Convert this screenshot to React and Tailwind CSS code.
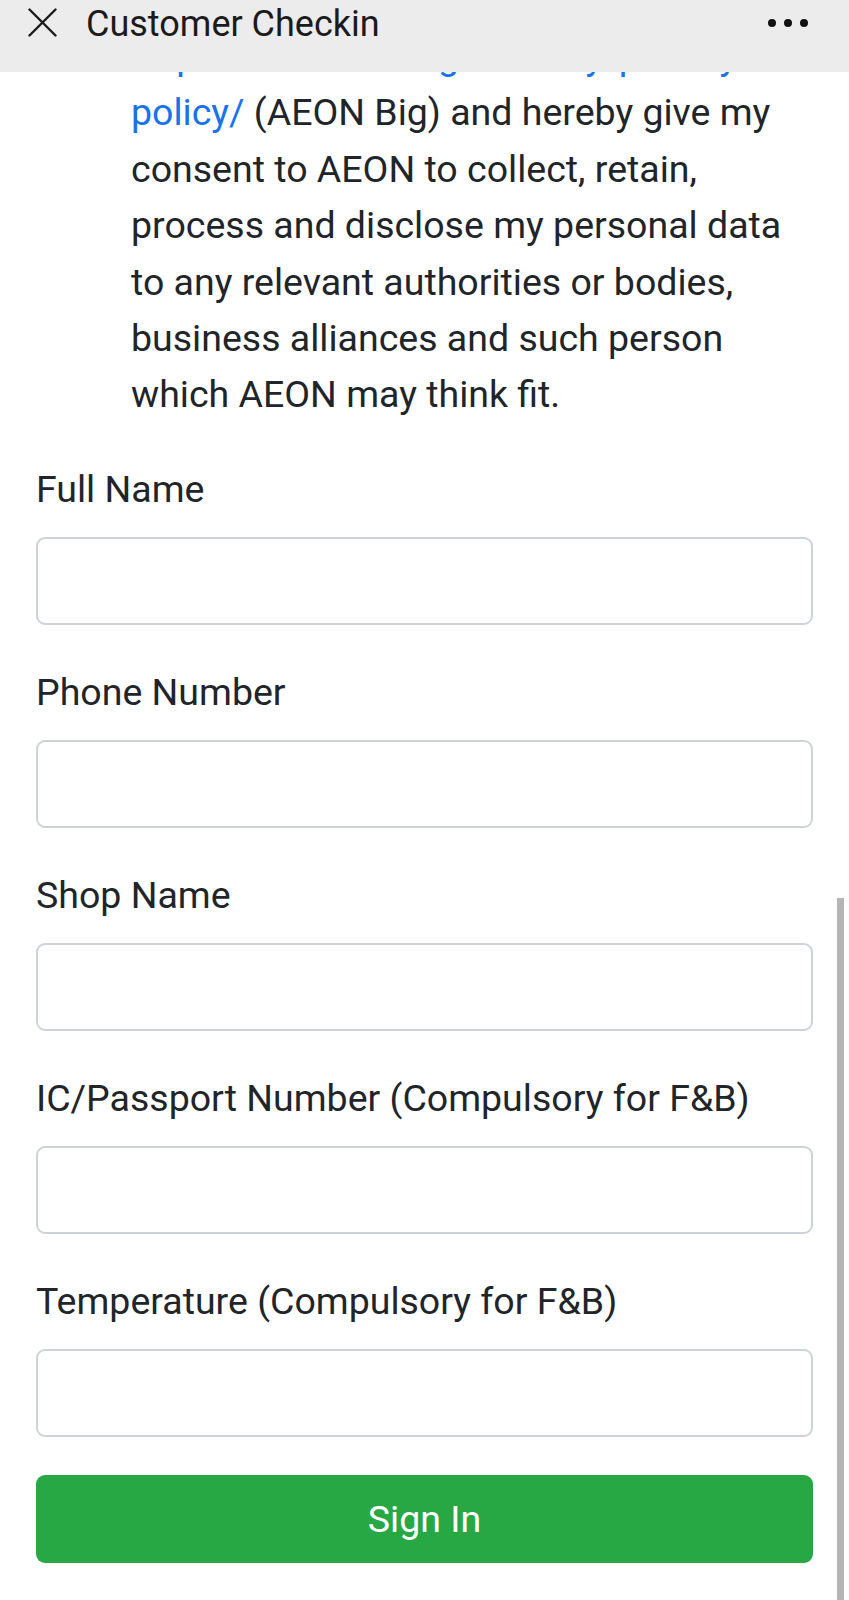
import React from 'react';

const fields = [
  'Full Name',
  'Phone Number',
  'Shop Name',
  'IC/Passport Number (Compulsory for F&B)',
  'Temperature (Compulsory for F&B)',
];

const App = () => {
  return (
    <div className="relative w-[849px] h-[1600px] overflow-hidden bg-white text-[#212529] font-['Roboto',sans-serif]">
      {/* Top bar (sits over the scrolled content) */}
      <div className="absolute top-0 left-0 right-0 z-10 h-[72px] bg-[#ececec]">
        <div className="flex items-center h-[45px]">
          <svg className="ml-[28px] w-[29px] h-[29px]" viewBox="0 0 29 29" fill="none" stroke="#1b1b1b" strokeWidth="2.4" strokeLinecap="round">
            <path d="M1.5 1.5 L27.5 27.5 M27.5 1.5 L1.5 27.5" />
          </svg>
          <span className="ml-[29px] mt-[3px] text-[36px] leading-none text-[#1b1b1b]">Customer Checkin</span>
          <div className="ml-auto mr-[41px] flex items-center gap-[8px]">
            <span className="w-[8px] h-[8px] rounded-full bg-[#111]"></span>
            <span className="w-[8px] h-[8px] rounded-full bg-[#111]"></span>
            <span className="w-[8px] h-[8px] rounded-full bg-[#111]"></span>
          </div>
        </div>
      </div>

      {/* Scroll indicator */}
      <div className="absolute top-[898px] right-[5px] bottom-0 w-[7px] bg-[#b5b5b5]"></div>

      {/* Consent text (scrolled, first line under the bar) */}
      <div className="pt-[28px] pl-[131px] text-[37.5px] leading-[56.4px] whitespace-nowrap">
        <div className="text-[#1a73e8]">http://www.aeonbig.com.my/privacy-</div>
        <div><span className="text-[#1a73e8]">policy/</span> (AEON Big) and hereby give my</div>
        <div>consent to AEON to collect, retain,</div>
        <div>process and disclose my personal data</div>
        <div>to any relevant authorities or bodies,</div>
        <div>business alliances and such person</div>
        <div>which AEON may think fit.</div>
      </div>

      {/* Form */}
      <div className="mt-[42px] px-[36px]">
        {fields.map((label, i) => (
          <div key={label} className={i === fields.length - 1 ? 'mb-[38px]' : 'mb-[43px]'}>
            <label className="block text-[37.5px] leading-[48px] mb-[24px]">{label}</label>
            <input type="text" className="block w-full h-[88px] rounded-[9px] border-2 border-[#cfd3d7] bg-white outline-none" />
          </div>
        ))}
        <button className="block w-full h-[88px] rounded-[9px] bg-[#28a745] text-white text-[37.5px]">Sign In</button>
      </div>
    </div>
  );
};

export default App;
